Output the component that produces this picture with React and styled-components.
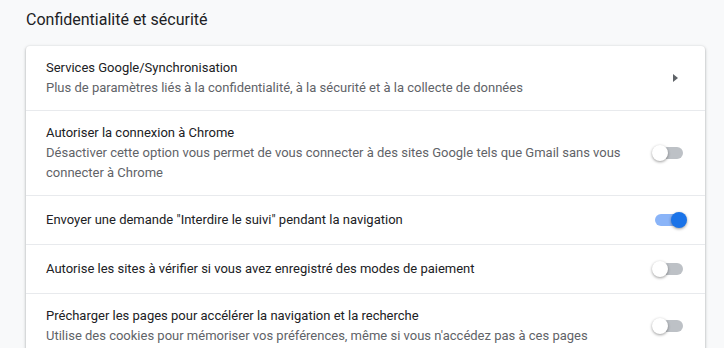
import React from 'react'
import styled, { createGlobalStyle } from 'styled-components'

const GlobalStyle = createGlobalStyle`
  html, body {
    margin: 0;
    padding: 0;
    background: #f8f9fa;
    font-family: Roboto, "Liberation Sans", sans-serif;
  }
`;

const Page = styled.div`
  width: 724px;
  height: 348px;
  overflow: hidden;
  padding: 0 19px 0 26px;
  box-sizing: border-box;
`;

const SectionTitle = styled.h2`
  margin: 0;
  padding-top: 10px;
  height: 36px;
  font-size: 16px;
  font-weight: 400;
  line-height: 20px;
  color: #202124;
`;

const Card = styled.div`
  background: white;
  border-radius: 4px;
  box-shadow: 0 1px 2px 0 rgba(60, 64, 67, 0.3), 0 1px 3px 1px rgba(60, 64, 67, 0.15);
`;

const Row = styled.div`
  display: flex;
  align-items: center;
  padding: ${props => props.multi ? '12px' : '14px'} 20px;
  border-top: ${props => props.first ? 'none' : '1px solid #e8eaed'};
  cursor: pointer;
`;

const Texts = styled.div`
  flex: 1;
  padding-right: 24px;
`;

const Label = styled.div`
  font-size: 13px;
  line-height: 20px;
  color: #202124;
`;

const Sub = styled.div`
  font-size: 13px;
  line-height: 20px;
  color: #5f6368;
`;

const Arrow = styled.div`
  width: 0;
  height: 0;
  margin-right: 7px;
  border-top: 4.5px solid transparent;
  border-bottom: 4.5px solid transparent;
  border-left: 5px solid #5f6368;
`;

const Toggle = styled.div`
  position: relative;
  width: 35px;
  height: 16px;
  margin-right: -2px;
  flex-shrink: 0;
`;

const Track = styled.div`
  position: absolute;
  left: 3px;
  top: 2px;
  width: 28px;
  height: 12px;
  border-radius: 6px;
  background: ${props => props.on ? '#8ab4f8' : '#bdc1c6'};
`;

const Knob = styled.div`
  position: absolute;
  top: 0;
  left: ${props => props.on ? '19px' : '0'};
  width: 16px;
  height: 16px;
  border-radius: 50%;
  background: ${props => props.on ? '#1a73e8' : 'white'};
  box-shadow: 0 1px 3px 0 rgba(0, 0, 0, 0.4);
`;

const Switch = ({ on }) => (
  <Toggle>
    <Track on={on} />
    <Knob on={on} />
  </Toggle>
);

const rows = [
  {
    label: 'Services Google/Synchronisation',
    sub: 'Plus de paramètres liés à la confidentialité, à la sécurité et à la collecte de données',
    arrow: true
  },
  {
    label: 'Autoriser la connexion à Chrome',
    sub: 'Désactiver cette option vous permet de vous connecter à des sites Google tels que Gmail sans vous connecter à Chrome',
    on: false
  },
  {
    label: 'Envoyer une demande "Interdire le suivi" pendant la navigation',
    on: true
  },
  {
    label: 'Autorise les sites à vérifier si vous avez enregistré des modes de paiement',
    on: false
  },
  {
    label: 'Précharger les pages pour accélérer la navigation et la recherche',
    sub: "Utilise des cookies pour mémoriser vos préférences, même si vous n'accédez pas à ces pages",
    on: false
  }
];

export default function App() {
  return (
    <Page>
      <GlobalStyle />
      <SectionTitle>Confidentialité et sécurité</SectionTitle>
      <Card>
        {rows.map((r, i) => (
          <Row key={i} first={i === 0} multi={!!r.sub}>
            <Texts>
              <Label>{r.label}</Label>
              {r.sub && <Sub>{r.sub}</Sub>}
            </Texts>
            {r.arrow ? <Arrow /> : <Switch on={r.on} />}
          </Row>
        ))}
      </Card>
    </Page>
  )
}
